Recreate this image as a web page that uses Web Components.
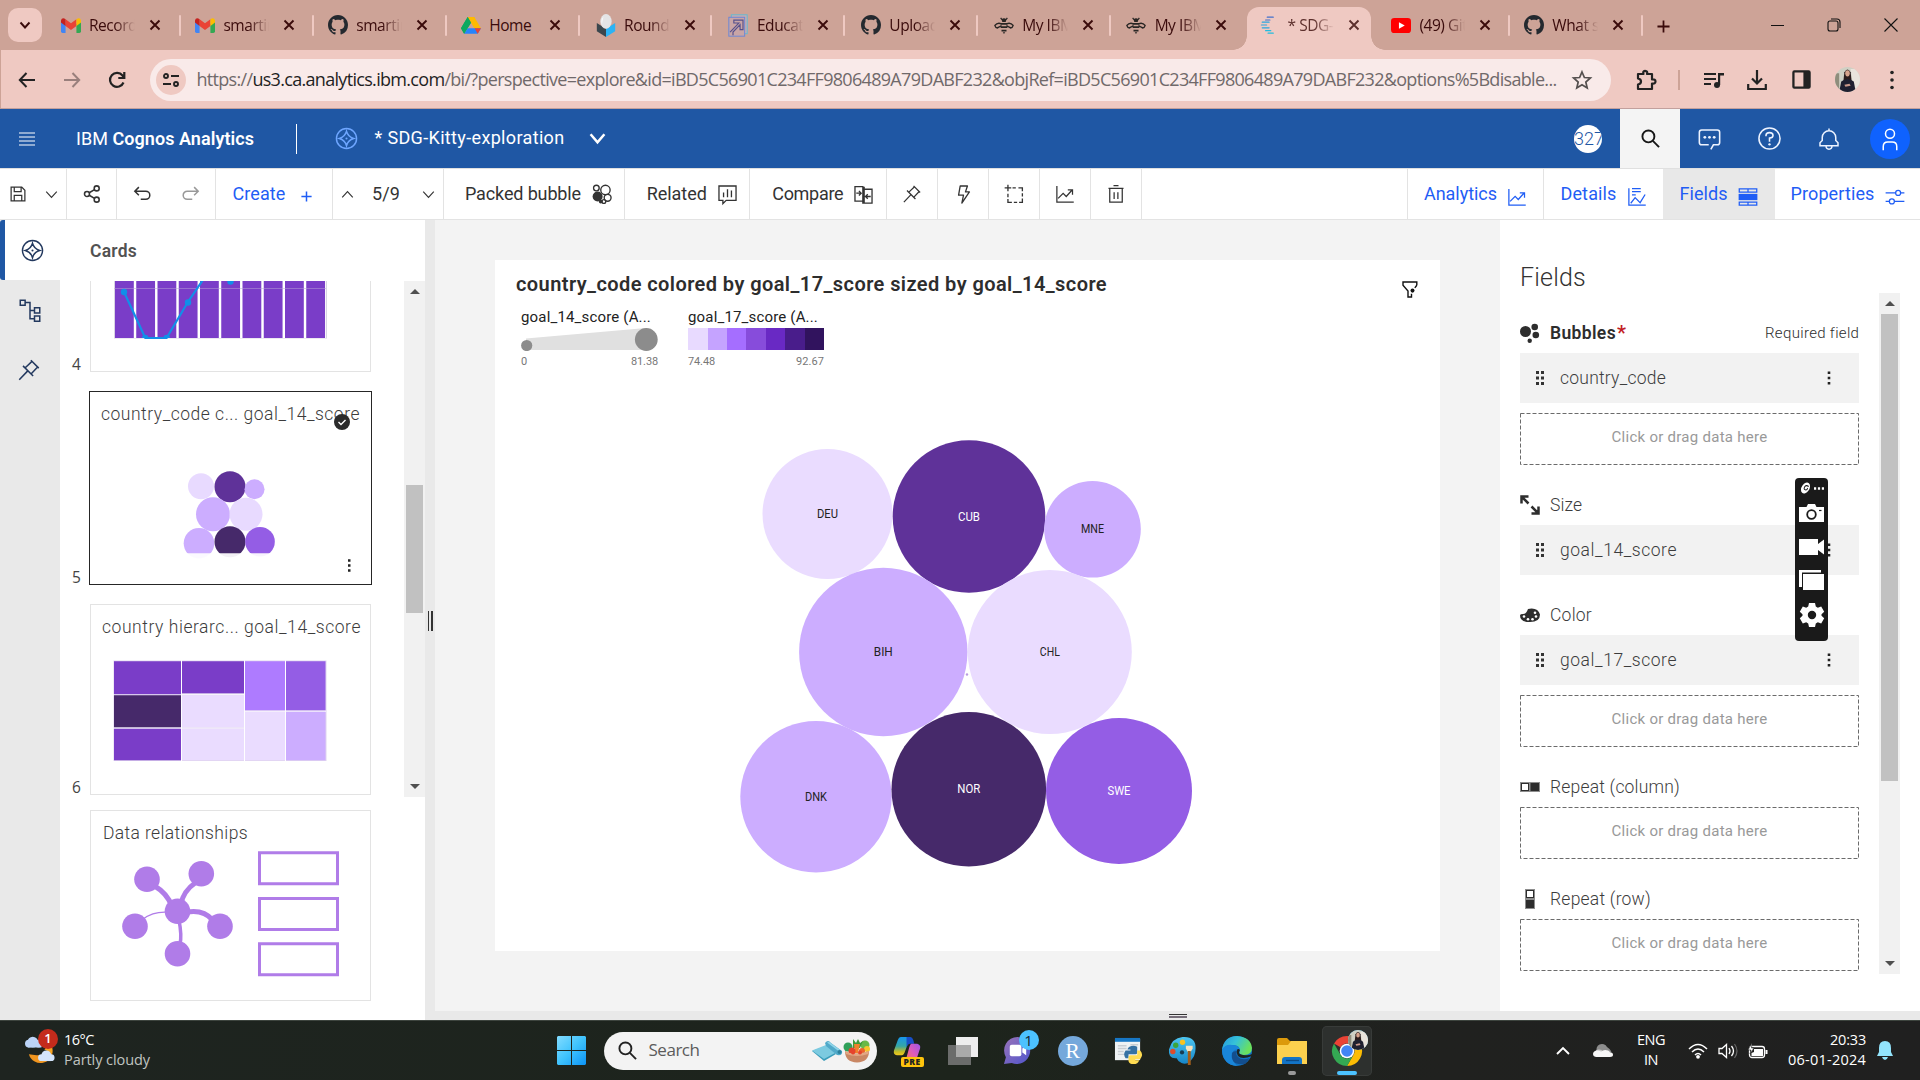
<!DOCTYPE html>
<html lang="en">
<head>
<meta charset="utf-8">
<title>SDG-Kitty-exploration</title>
<style>
html,body{margin:0;padding:0;width:1920px;height:1080px;overflow:hidden;background:#fff;font-family:Roboto,"Open Sans",sans-serif}
</style>
</head>
<body>
<analytics-desktop></analytics-desktop>
<script>
function define(name, css, html, setup) {
  customElements.define(name, class extends HTMLElement {
    constructor() {
      super();
      this.attachShadow({mode: 'open'});
    }
    connectedCallback() {
      if (this.ready) return;
      this.ready = true;
      const markup = typeof html === 'function' ? html(this) : html;
      const t = document.createElement('template');
      t.innerHTML = '<style>*{box-sizing:border-box}:host{display:block;box-sizing:border-box}' + css + '</style>' + markup;
      this.shadowRoot.appendChild(t.content.cloneNode(true));
      if (setup) setup(this);
    }
  });
}
const st = (d, w = 2, extra = '') => `<g fill="none" stroke="currentColor" stroke-width="${w}" ${extra}>${d}</g>`;
const p = d => `<path d="${d}"/>`;

const GITHUB = '<path d="M8 0C3.58 0 0 3.58 0 8c0 3.54 2.29 6.53 5.47 7.59.4.07.55-.17.55-.38 0-.19-.01-.82-.01-1.49-2.01.37-2.53-.49-2.69-.94-.09-.23-.48-.94-.82-1.13-.28-.15-.68-.52-.01-.53.63-.01 1.08.58 1.23.82.72 1.21 1.87.87 2.33.66.07-.52.28-.87.51-1.07-1.78-.2-3.64-.89-3.64-3.95 0-.87.31-1.59.82-2.15-.08-.2-.36-1.02.08-2.12 0 0 .67-.21 2.2.82.64-.18 1.32-.27 2-.27s1.36.09 2 .27c1.53-1.04 2.2-.82 2.2-.82.44 1.1.16 1.92.08 2.12.51.56.82 1.27.82 2.15 0 3.07-1.87 3.75-3.65 3.95.29.25.54.73.54 1.48 0 1.07-.01 1.93-.01 2.2 0 .21.15.46.55.38A8.01 8.01 0 0 0 16 8c0-4.42-3.58-8-8-8z" fill="#24292f"/>';
const compass = st('<circle cx="16" cy="16" r="14"/>' + p('M16 6c1.5 5.500 4.500 8.500 10 10c-5.500 1.500-8.500 4.500-10 10c-1.500-5.500-4.500-8.500-10-10c5.500-1.500 8.500-4.500 10-10z')) + '<circle cx="16" cy="16" r="1.500"/>';
const avatar = '<clipPath id="c"><circle cx="12" cy="12" r="12"/></clipPath><g clip-path="url(#c)"><path fill="#cfd0c4" d="M0 0h24v24H0z"/><path fill="#e9e4dc" d="M15 2h9v20h-6z"/><path fill="#8e8d7c" d="M0 6h4v18H0z"/><path fill="#2b1c1c" d="M9 5q3-5 6 0l1 9H8z"/><ellipse cx="12" cy="6" rx="2.200" ry="3" fill="#d6a38c"/><path fill="#1f2030" d="M4 24l2-10q6-5 12 0l2 10z"/><path fill="#c9988a" d="M9 17l5-1 1 2-5 1z"/></g>';

const ICONS = {
  gmail: ['0 0 24 18', '<path fill="#4285f4" d="M0 3v13q0 2 2 2h3.500V7.500z"/><path fill="#34a853" d="M24 3v13q0 2-2 2h-3.500V7.500z"/><path fill="#ea4335" d="M5.500 9.500V1.500L12 6.300l6.500-4.800v8L12 14.400z"/><path fill="#c5221f" d="M0 2.800v2.600l5.500 4.100V1.500L4 .5Q1-.8 0 2.800z"/><path fill="#fbbc04" d="M24 2.800v2.600l-5.500 4.100V1.500L20 .5q3-1.300 4 2.300z"/>'],
  github: ['0 0 16 16', GITHUB],
  drive: ['0 0 24 21', '<path fill="#0da960" d="M8 0h0L0 14l3.700 6.800L12 7z"/><path fill="#188038" d="M8 0h8l-4 7z"/><path fill="#ffba00" d="M8 0h8l8 14h-8z"/><path fill="#2684fc" d="M3.700 20.800L8 14h16l-4 6.800z"/><path fill="#ea4335" d="M16.300 14H24l-4 6.800z"/><path fill="#0da960" d="M8 0L0 14l3.700 6.800L12 7z"/>'],
  roundme: ['0 0 24 28', '<path fill="#3a464d" d="M1 11l11 7v10L1 21z"/><path fill="#2bb3f5" d="M23 11l-11 7v10l11-7z"/><ellipse cx="12" cy="9" rx="6.800" ry="9" fill="#e4e4e6"/><path fill="#fff" d="M9 3q-4 4-2 10" opacity=".7"/>'],
  educate: ['0 0 24 28', '<rect x="4" y="1" width="19" height="23" fill="#c9acb0" stroke="#63b9d3" stroke-width="1.200"/><rect x="1" y="4" width="19" height="23" fill="#c9a5a6" stroke="#6d86d6" stroke-width="1.200"/><path d="M2.500 22L13 11H7V7.500h11V19h-3.500v-6L6 22v4" fill="none" stroke="#55508c" stroke-width="1.400"/>'],
  bee: ['0 0 24 20', '<g fill="#292624"><path d="M9 3q3-3 6 0l-1 3h-4zM8 7h8v2H8zM8 11h8v2H8zM9 15h6v2H9zM10.500 18h3l-1.500 2z"/></g><g fill="none" stroke="#292624" stroke-width="1.500"><path d="M9 8Q4 6 1 10q1 3 3 3l5-3M3 13l6-2.500M15 8q5-2 8 2q-1 3-3 3l-5-3M21 13l-6-2.500M9.500 3L8 1M14.500 3L16 1"/></g>'],
  cognos: ['0 0 24 28', '<g stroke="#2aa6df" stroke-width="1.700" stroke-linecap="round"><path stroke="#4370cc" d="M10 3h7M8 7h5"/><path d="M4 10h8M3 14h6M4 18h8"/><path stroke="#22bddf" d="M8 22h6M11 25.500h6"/></g>'],
  youtube: ['0 0 24 18', '<rect width="24" height="18" rx="4" fill="#f00"/><path d="M9.500 5v8l7-4z" fill="#fff"/>'],
  x: ['0 0 12 12', st(p('M1.500 1.500l9 9M10.500 1.500l-9 9'), 1.9)],
  plusThin: ['0 0 14 14', st(p('M7 .5v13M.5 7h13'), 1.900)],
  down: ['0 0 14 14', st(p('M2.500 4.500L7 9.500l4.500-5'), 1.900)],
  chev: ['0 0 16 16', st(p('M1.500 4.500L8 11.500l6.500-7'), 1.400)],
  chevUp: ['0 0 16 16', st(p('M1.500 11.500L8 4.500l6.500 7'), 1.400)],
  chevBold: ['0 0 16 16', st(p('M1.500 4L8 11.500L14.500 4'), 2.400)],
  min: ['0 0 14 14', st(p('M0 7h14'), 1.100)],
  max: ['0 0 14 14', st('<rect x="1" y="3" width="10" height="10" rx="2"/>' + p('M4 1h6q3 0 3 3v6'), 1.100)],
  close: ['0 0 14 14', st(p('M.5.5l13 13M13.500.5l-13 13'), 1.100)],
  back: ['0 0 18 18', st(p('M17 9H2M8.500 2L1.800 9l6.700 7'), 2)],
  fwd: ['0 0 18 18', st(p('M1 9h15M9.500 2l6.700 7l-6.700 7'), 2)],
  reload: ['0 0 18 18', st(p('M15.500 11.500A7 7 0 1 1 14.500 4.500L16 6.500M16.300 1v6h-6'), 2.200)],
  tune: ['0 0 18 14', st('<circle cx="4" cy="3" r="2"/><circle cx="14" cy="11" r="2"/>' + p('M9 3h8M1 11h8'), 1.900)],
  star: ['0 0 20 20', st(p('M10 2l2.400 5.500l6 .5l-4.600 4l1.400 6L10 14.800L4.800 18l1.400-6l-4.600-4l6-.5z'), 1.700)],
  puzzle: ['0 0 22 22', st(p('M3 5h5.500q-1-3 1.500-3.200Q13 2 12 5h5v5.500q3.500-.5 3.500 2t-3.500 2V20H3v-4.500q3-.5 3-3T3 9.500z'), 2.200, 'stroke-linejoin="round"')],
  queue: ['0 0 20 18', st(p('M0 3h12M0 8h12M0 13h7'), 2) + '<circle cx="13" cy="14" r="3"/>' + p('M14 2h6v2.600h-3.800V14H14z')],
  download: ['0 0 20 20', st(p('M10 0v13M5 8.500l5 5l5-5M1.200 14v5h17.600v-5'), 2.200)],
  side: ['0 0 20 20', st('<rect x="1.500" y="1.500" width="17" height="17" rx="1"/>', 2.400) + p('M12 2h6v16h-6z')],
  vdots: ['0 0 4 20', '<circle cx="2" cy="2.500" r="1.800"/><circle cx="2" cy="10" r="1.800"/><circle cx="2" cy="17.500" r="1.800"/>'],
  vdotsS: ['0 0 4 16', p('M.7 1.500h2.600v2.600H.7zM.7 6.700h2.600v2.600H.7zM.7 11.900h2.600v2.600H.7z')],
  avatar: ['0 0 24 24', avatar],
  menu: ['0 0 16 14', st(p('M0 1h16M0 5h16M0 9h16M0 13h16'), 1.200)],
  compass: ['0 0 32 32', compass],
  search: ['0 0 20 20', st('<circle cx="7.800" cy="7.800" r="6.300"/>' + p('M12.500 12.500L19 19'), 2)],
  chat: ['0 0 32 32', st(p('M17.700 30L21 24h5a3 3 0 0 0 3-3V8a3 3 0 0 0-3-3H6a3 3 0 0 0-3 3v13a3 3 0 0 0 3 3h9')) + '<circle cx="10" cy="14.500" r="1.800"/><circle cx="16" cy="14.500" r="1.800"/><circle cx="22" cy="14.500" r="1.800"/>'],
  help: ['0 0 32 32', st('<circle cx="16" cy="16" r="13.500"/>' + p('M11.500 13v-1q0-3.500 4.500-3.500t4.500 3.500q0 3-4.500 3.500V20')) + '<circle cx="16" cy="23.500" r="1.500"/>'],
  bell: ['0 0 32 32', st(p('M16 2v3M4 25v-4l3-3v-4a9 9 0 0 1 18 0v4l3 3v4zM12 25q0 4.500 4 4.500t4-4.500'))],
  user: ['0 0 32 32', st('<circle cx="16" cy="9" r="6"/>' + p('M7 31v-5q0-6 6-6h6q6 0 6 6v5'), 2)],
  save: ['0 0 32 32', st(p('M5 5h17l5 5v17H5zM10 5v7h11V5M10 27v-9h12v9'), 2)],
  share: ['0 0 32 32', st('<circle cx="23.500" cy="7" r="4"/><circle cx="8" cy="16" r="4"/><circle cx="23.500" cy="25" r="4"/>' + p('M11.500 14l8.500-5M11.500 18l8.500 5'), 2.500)],
  undo: ['0 0 32 32', st(p('M11 5l-6.500 6.500L11 18M5 11.500h17a6.500 6.500 0 0 1 0 13h-8'), 2.400)],
  redo: ['0 0 32 32', st(p('M21 5l6.500 6.500L21 18M27 11.500H10a6.500 6.500 0 0 0 0 13h8'), 2.400)],
  packed: ['0 0 32 32', '<circle cx="9" cy="20" r="8"/><circle cx="14" cy="28" r="3"/>' + st('<circle cx="21.500" cy="9.500" r="7.500"/><circle cx="7" cy="6.500" r="4.500"/><circle cx="25" cy="22" r="5.500"/><circle cx="19" cy="28" r="3"/>', 2.200)],
  related: ['0 0 32 32', st(p('M3 3h26v22H14l-5 5v-5H3zM10 20v-7M16 20V8M22 20v-10'), 2)],
  compare: ['0 0 32 32', st(p('M3 4h12v22H3zM17 8h12v21H17zM17 8V4M5 14h7M9 10.500l3.500 3.500L9 17.500M27 19h-8M22.500 15.500L19 19l3.500 3.500M15 4v25h2'), 2)],
  pin: ['0 0 32 32', st(p('M18.500 3L29 13.500M20 4.500l-9 8.500M27.500 12l-8.500 9M8 10.500l13.500 13.500M14 17.500L3 29M11 13l-2-1'), 2)],
  bolt: ['0 0 32 32', st(p('M11 3h11l-3 9h6L13.500 29l2.500-12H8.500z'), 2, 'stroke-linejoin="round"')],
  marquee: ['0 0 32 32', st(p('M6 1v10M1 6h10M13 6h5M22 6h6v5M28 14v5M28 22v6h-5M20 28h-5M12 28H6v-5M6 20v-5'), 2)],
  line: ['0 0 32 32', st(p('M3 3v26h27M5 23l8-8l5 5l9-10M20.500 9.500H28V17'), 2)],
  trash: ['0 0 32 32', st(p('M4 7h24M12 2.500h8M6 7v22h20V7M13 13v11M19 13v11'), 2)],
  details: ['0 0 32 32', st(p('M3 2v27h27M8 2.500h14M8 7.500h14M8 12.500h6M6 26l7-9l8 8l8-13'), 2)],
  fields: ['0 0 32 32', p('M1 11h30v10H1z') + st(p('M2 3h28v5H2zM2 24h28v5H2zM16 3v5M16 24v5'), 2)],
  sliders: ['0 0 32 32', st('<circle cx="21" cy="9.500" r="4"/><circle cx="11" cy="23" r="4"/>' + p('M1 9.500h16M25 9.500h6M1 23h6M15 23h16'), 2)],
  tree: ['0 0 32 32', st(p('M3 3h6.500v6.500H3zM22 13h7v7h-7zM22 24h7v7h-7zM10 6h6v21.500h6M16 16.500h6'), 2)],
  filter: ['0 0 16 16', st(p('M14.800 4V1H1v3l5 5.500V15h3.500v-3M14.800 4l-2 2.500'), 1.400) + '<circle cx="10.500" cy="9" r="2"/>'],
  bubbles: ['0 0 20 20', '<circle cx="5.500" cy="8.500" r="5.500"/><circle cx="14.700" cy="4" r="3.300"/><circle cx="15.800" cy="12" r="3.300"/><circle cx="9.700" cy="17.700" r="2.200"/>'],
  size: ['0 0 20 20', st(p('M1.500 8.500v-7h7M1.500 1.500l7 7M18.500 11.500v7h-7M18.500 18.500l-7-7'), 2.500)],
  palette: ['0 0 20 16', '<path d="M8 1q10-2 12 6q0 8-10 8Q0 15 0 8q0-1.500 3-1.500t5-5.500z"/><g fill="#fff"><circle cx="4" cy="9" r="1.300"/><circle cx="8" cy="12" r="1.300"/><circle cx="12.500" cy="12" r="1.300"/><circle cx="16" cy="9" r="1.300"/><circle cx="15" cy="5" r="1.300"/></g>'],
  repcol: ['0 0 20 10', '<path fill="#8d8d8d" d="M0 0h20v10H0z"/><path fill="#fff" d="M2 2h6v6H2z"/><path d="M10.500 1H19v8h-8.500z"/>' + st('<rect x="1.500" y="1.500" width="7" height="7"/>', 1)],
  reprow: ['0 0 20 20', '<path fill="#8d8d8d" d="M5 0h10v20H5z"/><path fill="#fff" d="M7 2h6v6H7z"/><path d="M6 11h8v8H6z"/>' + st('<rect x="6.500" y="1.500" width="7" height="7"/>', 1)],
  grip: ['0 0 8 14', p('M0 0h3v3H0zM5 0h3v3H5zM0 5.500h3v3H0zM5 5.500h3v3H5zM0 11h3v3H0zM5 11h3v3H5z')],
  camera: ['0 0 25 18', p('M0 3h7.500l1.500-3h7l1.500 3H25v15H0z') + '<g fill="none" stroke="#1a1a1a" stroke-width="1.800"><circle cx="12.500" cy="10.500" r="4.300"/><path d="M20 6.500h2.500" stroke-width="1.200"/></g>'],
  video: ['0 0 25 16', p('M0 0h19v5l6-4.500v15L19 11v5H0z')],
  stack: ['0 0 25 20', '<path d="M0 0h22v2.500H3V17H0z"/><path d="M4 4h21v16H4z"/>'],
  gear: ['0 0 24 24', '<path fill-rule="evenodd" d="M9 0h6l.8 3.600l2 1.200l3.400-1.200l3 5.200l-2.700 2.400v1.600l2.700 2.400l-3 5.200l-3.400-1.200l-2 1.200L15 24H9l-.8-3.600l-2-1.200l-3.400 1.200l-3-5.200l2.700-2.400v-1.600L-.2 8.800l3-5.200l3.400 1.200l2-1.200zM12 7.800a4.200 4.200 0 1 0 0 8.400a4.200 4.200 0 1 0 0-8.400z"/>'],
  swirl: ['0 0 12 12', '<ellipse cx="6" cy="6" rx="4.200" ry="6" transform="rotate(38 6 6)"/><path d="M9.500 4.500q-3-2-4.500.5t1.500 3q2-.5 1.500-2" fill="none" stroke="#1a1a1a" stroke-width="1.100"/>'],
  dots3: ['0 0 11 3', p('M0 .3h2.400v2.400H0zM4.300.3h2.400v2.400H4.300zM8.600.3H11v2.400H8.600z')],
  weather: ['0 0 32 34', '<path d="M4 25a12 12 0 0 0 24-7q-8 9-16 8z" fill="#f0951f"/><path d="M20 20l8-8v12z" fill="#f5a623"/><g fill="#bcd4f7"><circle cx="8" cy="12.500" r="5.500"/><circle cx="4" cy="14" r="4"/><path d="M3 13h14v5H3z"/><circle cx="14" cy="14" r="4"/></g><g fill="#d4e5fd"><circle cx="22" cy="26" r="5"/><circle cx="17" cy="28.500" r="3.500"/><circle cx="27" cy="28.500" r="3.500"/><path d="M17 27h10v5H17z"/></g>'],
  windows: ['0 0 29 29', '<linearGradient id="w" x1="0" y1="0" x2="1" y2="1"><stop offset="0" stop-color="#83dcff"/><stop offset=".5" stop-color="#3fc3fd"/><stop offset="1" stop-color="#0c93f5"/></linearGradient><path fill="url(#w)" d="M1 0h13v14H0V1zM15 0h13l1 1v13H15zM0 15h14v14H1l-1-1zM15 15h14v13l-1 1H15z"/>'],
  mat: ['0 0 30 20', '<path fill="#3a9cba" d="M0 10L14 5l10 8l-12 7z"/><path fill="#7ccae0" d="M0 9.500L14 4l9 8l-11 6z"/><path fill="#4fa9c9" d="M13 2q3-4 6 0l11 8q1 5-5 4L14 5z"/><path fill="#8fd4e8" d="M15 1.500q2-1.500 4 .8l9.500 7q-1 1-3 0z"/><circle cx="27.500" cy="11" r="2" fill="#2b7f9b"/>'],
  salad: ['0 0 26 24', '<circle cx="4" cy="8" r="4.500" fill="#2fa05a"/><circle cx="21" cy="6" r="4.500" fill="#68b947"/><path fill="#3f9b3a" d="M9 0l3 4l2-4l2 4l3-2l-3 7H9z"/><path fill="#f2812c" d="M10 5h6l-2 9h-3z"/><circle cx="23" cy="10" r="3" fill="#f5c62b"/><circle cx="8" cy="12" r="3.500" fill="#e5442d"/><circle cx="18" cy="12" r="3" fill="#ec642c"/><path fill="#c98764" d="M1 12q5 3 12 2.500T25 12q0 11-12 11.500Q1 23 1 12z"/><path fill="#e2a784" d="M1 12q5 3 12 2.500T25 12l-1 3q-11 4-22 0z"/><circle cx="9" cy="13.500" r="2" fill="#e5442d"/><circle cx="16" cy="13.500" r="2" fill="#e5442d"/>'],
  copilot: ['0 0 30 28', '<linearGradient id="a" x1="0" y1="0" x2="0" y2="1"><stop offset="0" stop-color="#1797ee"/><stop offset=".5" stop-color="#35a6a5"/><stop offset=".8" stop-color="#c3bc27"/><stop offset="1" stop-color="#f2c91c"/></linearGradient><linearGradient id="b" x1="1" y1="0" x2="0" y2="1"><stop offset="0" stop-color="#9d55e8"/><stop offset=".5" stop-color="#df5abb"/><stop offset="1" stop-color="#fb7e4f"/></linearGradient><path fill="url(#a)" d="M8 0h10l-6 16q-1 3-4 3H4q-4-1-3-5L5 3q1-3 3-3z"/><path fill="#184ec8" d="M14 0h4q2 0 3 3l1 4h-4q-3 0-4 4z"/><path fill="url(#b)" d="M19 7h6q4 1 3 5l-3 9q-1 4-5 4h-7l4-15q1-3 2-3z"/>'],
  taskview: ['0 0 30 28', '<path fill="#6b6c6b" d="M0 8h23v20H0z"/><path fill="#eee" d="M8 0h22v20H8z"/><path fill="#aaa" d="M8 8h15v12H8z"/>'],
  teams: ['0 0 30 30', '<linearGradient id="t" x1="0" y1="0" x2="1" y2="1"><stop offset="0" stop-color="#9a73b8"/><stop offset="1" stop-color="#5055cd"/></linearGradient><path fill="url(#t)" d="M15 1a14 14 0 1 1-6 27L1 29l2-7A14 14 0 0 1 15 1z"/><rect x="7" y="9" width="12" height="12" rx="2" fill="#fff"/><path fill="#fff" d="M20 13l4-3v10l-4-3z"/>'],
  python: ['0 0 30 30', '<path fill="#eef2f4" d="M1 3h26v22H1z"/><path fill="#1777c5" d="M1 2h26v4H1z"/><path stroke="#c9ced3" stroke-width="1.500" d="M4 10h9M4 13h9M4 16h6M4 19h8M17 9h8"/><path fill="#3571a3" d="M16 11q4-2 8 0v6q0 2-2 2h-7v4h-3q-3-4 0-8h5v-1h-3q0-2 2-3z"/><path fill="#ffdc52" d="M20 29q-4 0-5-3v-4q0-2 2-2h7v-5h3q4 4 0 9h-5v1h4q-1 4-6 4z"/>'],
  paint: ['0 0 30 30', '<linearGradient id="p" x1="0" y1="0" x2="0" y2="1"><stop offset="0" stop-color="#4cc5f1"/><stop offset="1" stop-color="#1787c9"/></linearGradient><path fill="url(#p)" d="M15 1q14-1 13.500 12q0 8-5.500 13q-4 4-9 2q-4-2-5-5Q0 24 1 14Q4 2 15 1z"/><circle cx="15" cy="6.500" r="2.800" fill="#f8c321"/><circle cx="8" cy="9.500" r="2.800" fill="#3ba53c"/><circle cx="5" cy="16" r="2.800" fill="#de4b2a"/><circle cx="14.500" cy="17" r="2.200" fill="#173d54"/><path fill="#f6e3bf" d="M18.500 10h7v3l-2 3.500h-3l-2-3.500z"/><path fill="#a35d19" d="M20.500 15.500h3V30h-3z"/>'],
  edge: ['0 0 30 30', '<linearGradient id="e" x1="0" y1="0" x2="1" y2=".4"><stop offset="0" stop-color="#2496dd"/><stop offset=".5" stop-color="#36c2d8"/><stop offset="1" stop-color="#6ae15d"/></linearGradient><circle cx="15" cy="15" r="15" fill="#1173c5"/><path fill="url(#e)" d="M0 14Q2 0 15 0q14 1 15 12q0 7-8 7q-6 0-4-4q0-6-7-6Q3 9 0 14z"/><path fill="#1a86da" d="M0 14q3-6 10-5q7 0 8 5q-7-2-8 5q0 6 5 11Q1 29 0 14z"/><path fill="#134e8e" d="M10 17q-2 13 13 11l5-6q-8 3-12-1q-3-3-1-6q-4 0-5 2z"/><path fill="#1e2420" d="M15 14q-1 3 1 6q4 4 14 0v-2q-3 2-9 1q-4-1-4-2q0-2 1-3q-2-2-3 0z"/>'],
  folder: ['0 0 30 26', '<path fill="#dc9a0b" d="M0 2q0-2 2-2h8l3 3h15v6H0z"/><path fill="#fcd04e" d="M0 7h11l3-4h16v23H0z"/><path fill="#1374c6" d="M5 26v-4q0-3 3-3h14q3 0 3 3v4z"/><path stroke="#0c4a86" stroke-width="1.300" d="M9 22.500h13"/>'],
  chrome: ['0 0 30 30', '<path fill="#ea4335" d="M15 0a15 15 0 0 1 13 7.500H15a7.500 7.500 0 0 0-6.500 3.700L2 7.500A15 15 0 0 1 15 0z"/><path fill="#fbbc04" d="M28 7.500A15 15 0 0 1 15 30l6.500-11.200A7.500 7.500 0 0 0 15 7.500z"/><path fill="#34a853" d="M2 7.500A15 15 0 0 0 15 30l6.500-11.200a7.500 7.500 0 0 1-13 0z"/><circle cx="15" cy="15" r="7.300" fill="#fff"/><circle cx="15" cy="15" r="5.800" fill="#4285f4"/>'],
  trayUp: ['0 0 14 8', st(p('M1 7l6-6l6 6'), 1.900)],
  cloud: ['0 0 20 14', '<path fill="#8d8d8d" d="M4 8a5.500 5.500 0 0 1 10-5q6 4 4 8H2z"/><path fill="#c9c9c9" d="M1 9q2-5 8-3l-2 7H3z"/><path fill="#f7f7f7" d="M4 13q-4 0-4-3t4-3.500q2 0 4 1Q11 5 15 6.500q2 1 2 2q3 0 3 2.200T17 13z"/>'],
  wifi: ['0 0 20 16', st(p('M1 6q9-9 18 0M4 9q6-6 12 0M7 12q3-3 6 0'), 1.500) + '<circle cx="10" cy="13.800" r="1.900"/>'],
  sound: ['0 0 20 16', st(p('M1 5.500h3L8.500 1.500v13L4 10.500H1zM11 5q2 3 0 6M13.500 3q4 5 0 10'), 1.300) + '<path d="M16.500 1q5 7 0 14" fill="none" stroke="#666" stroke-width="1.200"/>'],
  battery: ['0 0 20 16', st('<rect x="1.500" y="3.500" width="15" height="11" rx="2.500"/>', 1.300) + p('M6 6h9v7H3.500v-3L6 9zM17.500 7h2v4h-2z') + '<path d="M4 0L0 7h3l-1 4l4-6H3.500z" stroke="#202221" stroke-width=".6"/>'],
  bellFill: ['0 0 16 19', p('M8 0q6 0 6 7v4l2 4H0l2-4V7q0-7 6-7zM5 16h6q-1 3-3 3t-3-3z')]
};
const ic = (name, w, h = w, style = '') => `<ui-icon name="${name}" w="${w}" h="${h}" style="${style}"></ui-icon>`;
const lb = (text, w, size, style = '') => `<ui-label w="${w}" style="font-size:${size}px;${style}">${text}</ui-label>`;

/* ---------- browser chrome ---------- */
define('browser-tab', `
:host{width:132.900px;height:50px;flex:none}
.tab{display:flex;align-items:center;height:50px;padding-left:var(--pad,15px);position:relative;color:#3a0b0b}
:host([active]) .tab{color:#5c2f2c}
.bg{display:none;position:absolute;left:4px;right:5px;top:7px;bottom:0;background:#efc9c2;border-radius:12px 12px 0 0}
:host([active]) .bg{display:block}
.bg::before,.bg::after{content:"";position:absolute;bottom:0;width:14px;height:14px;background:radial-gradient(circle at 0 0,transparent 13.500px,#efc9c2 14px)}
.bg::before{left:-14px}.bg::after{right:-14px;background:radial-gradient(circle at 100% 0,transparent 13.500px,#efc9c2 14px)}
.fav{width:20px;display:flex;justify-content:center;position:relative}
.title{position:relative;width:47px;margin-left:8.500px;overflow:hidden;white-space:nowrap;font:15.500px "Open Sans",sans-serif;letter-spacing:-.45px;-webkit-mask-image:linear-gradient(90deg,#000 55%,transparent 98%);padding-bottom:1px}
:host([full]) .title{-webkit-mask-image:none}
.x{margin-left:13px;position:relative}
.sep{position:absolute;right:-1px;top:15px;width:2px;height:21px;background:#efc9c2;border-radius:1px}
:host([nosep]) .sep{display:none}`,
el => `<div class="tab"><div class="bg"></div><div class="fav">${ic(el.getAttribute('icon'), el.getAttribute('iw') || 20, el.getAttribute('ih') || 20)}</div><div class="title"><slot></slot></div><div class="x">${ic('x', 12)}</div><div class="sep"></div></div>`);

define('browser-tabs', `
:host{height:50px;background:#cda397;display:flex}
.drop{width:34px;height:34px;margin:8px 5px 0 8px;border-radius:10px;background:#efc9c2;display:flex;align-items:center;justify-content:center;color:#3a0b0b}
.plus{margin:18px 0 0 15px;color:#3a0b0b}
.win{margin-left:auto;display:flex;align-items:center;gap:43px;padding-right:22px;color:#111}`,
`<div class="drop">${ic('down', 14)}</div>
<browser-tab icon="gmail" ih="15" style="--pad:13.500px">Record</browser-tab><browser-tab icon="gmail" ih="15">smartin</browser-tab><browser-tab icon="github">smartin</browser-tab><browser-tab icon="drive" ih="17" full>Home</browser-tab><browser-tab icon="roundme" ih="23" style="--pad:17px">Rounde</browser-tab><browser-tab icon="educate" ih="23" style="--pad:17px">Educat</browser-tab><browser-tab icon="github" style="--pad:16.500px">Upload</browser-tab><browser-tab icon="bee" ih="17" style="--pad:16.500px">My IBM</browser-tab><browser-tab icon="bee" ih="17" nosep style="--pad:16px">My IBM</browser-tab><browser-tab icon="cognos" ih="20" active nosep style="--pad:16px">* SDG-K</browser-tab><browser-tab icon="youtube" ih="15">(49) Git</browser-tab><browser-tab icon="github">What s</browser-tab>
<div class="plus">${ic('plusThin', 13)}</div>
<div class="win">${ic('min', 13)}${ic('max', 14)}${ic('close', 14)}</div>`);

define('browser-toolbar', `
:host{height:59px;background:#efc9c2;border-bottom:1px solid #c2a09d;display:flex;align-items:center;padding:1px 0 0 18px;color:#222;box-shadow:inset 1px 0 #cda397}
.box{width:1461px;height:42px;border-radius:21px;background:#f9eae9;margin-left:23.500px;display:flex;align-items:center;padding-left:6px}
.chip{width:30px;height:30px;border-radius:50%;background:#efc9c2;display:flex;align-items:center;justify-content:center}
.url{font-family:"Open Sans",sans-serif;color:#70696a;margin-left:11px;width:1375px}
.url b{font-weight:400;color:#1f1f1f}
.sep{width:2px;height:20px;background:#cda397;margin:0 24px 0 21px}`,
`${ic('back', 18)}${ic('fwd', 18, 18, 'margin-left:27px;color:#997f7c')}${ic('reload', 18, 18, 'margin-left:27px')}
<div class="box"><div class="chip">${ic('tune', 18, 14)}</div><div class="url">${lb('https://<b>us3.ca.analytics.ibm.com</b>/bi/?perspective=explore&amp;id=iBD5C56901C234FF9806489A79DABF232&amp;objRef=iBD5C56901C234FF9806489A79DABF232&amp;options%5Bdisable...', 1360, 18)}</div>${ic('star', 20, 20, 'color:#55504f;margin-left:0px')}</div>
${ic('puzzle', 22, 22, 'margin-left:24px')}<div class="sep"></div>${ic('queue', 20, 18)}${ic('download', 20, 20, 'margin-left:23.5px')}${ic('side', 19, 19, 'margin-left:25px')}${ic('avatar', 25, 25, 'margin-left:24px')}${ic('vdots', 4, 20, 'margin-left:29.5px')}`);

/* ---------- product header ---------- */
define('product-header', `
:host{height:59px;background:#1f57a4;display:flex;align-items:center;color:#fff}
.sep{width:1px;height:30px;background:#fff;margin-left:42px}
.count{width:28px;height:28px;border-radius:50%;background:#fff;color:#1f57a4;overflow:hidden;display:flex;align-items:center;justify-content:flex-start;margin-left:auto;margin-right:18px}
.srch{width:60px;height:59px;background:#f4f4f4;color:#161616;display:flex;align-items:center;justify-content:center}
.btn{width:60px;display:flex;justify-content:center;color:#edf3ff;padding-right:2px}
.user{width:40px;height:40px;border-radius:50%;background:#0f62fe;display:flex;align-items:center;justify-content:center;margin:0 10px}`,
`${ic('menu', 16, 14, 'margin-left:19px')}${lb('IBM <b style="font-weight:600">Cognos Analytics</b>', 178, 18, 'margin-left:41px')}<div class="sep"></div>
${ic('compass', 23, 23, 'margin-left:38px;color:#6ea6ff')}${lb('* SDG-Kitty-exploration', 190, 18, 'margin:-2px 0 0 16.5px')}${ic('chevBold', 17, 17, 'margin-left:24px')}
<div class="count">${lb('327', 30, 18, 'font-weight:300')}</div><div class="srch">${ic('search', 19)}</div><div class="btn">${ic('chat', 25)}</div><div class="btn">${ic('help', 25)}</div><div class="btn">${ic('bell', 24)}</div><div class="user">${ic('user', 24)}</div>`);

/* ---------- tool bar ---------- */
define('tool-cell', `
:host{height:50px;flex:none;display:flex;align-items:center;justify-content:center;border-right:1px solid #e3e3e3}
:host([last]){border-right:0}:host([on]){background:#e8e8e8}`, '<slot></slot>', el => { el.style.width = el.getAttribute('w') + 'px'; });
const cell = (w, html, attr = '') => `<tool-cell w="${w}" ${attr}>${html}</tool-cell>`;
const act = (w, pad, t, tw, name, gap, attr = '') => cell(w, lb(t, tw, 18, `margin-left:${pad}px`) + ic(name, 20, 20, `margin:5px auto 0 ${gap}px`), attr);
define('tool-bar', `
:host{height:52px;border-top:1px solid #e0e0e0;border-bottom:1px solid #e3e3e3;background:#fff;display:flex;color:#333;padding-top:0}
.gap{flex:1;border-right:1px solid #e3e3e3}.blue{color:#1f5df5;display:flex}`,
cell(67, ic('save', 20, 20) + ic('chev', 13, 13, 'margin-left:17px')) + cell(50, ic('share', 20)) +
cell(99, ic('undo', 20) + ic('redo', 20, 20, 'margin-left:29px;color:#999')) +
cell(117, `<span style="color:#1f5df5;display:flex;align-items:center">${lb('Create', 53, 18)}${ic('plusThin', 11, 11, 'margin:6px 4px 0 15px')}</span>`) +
cell(111, ic('chevUp', 13) + lb('5/9', 28, 18, 'margin:0 22px 0 18px') + ic('chev', 13)) +
cell(181, lb('Packed bubble', 116, 18) + ic('packed', 20, 20, 'margin-left:11px;margin-right:-9px')) +
cell(124.500, lb('Related', 60, 18, 'margin-left:11px') + ic('related', 21, 21, 'margin-left:10px')) +
cell(137.500, lb('Compare', 71, 18, 'margin-left:11px') + ic('compare', 21, 21, 'margin-left:10px')) +
cell(51, ic('pin', 20)) + cell(51, ic('bolt', 21)) + cell(51, ic('marquee', 21)) + cell(51, ic('line', 20)) + cell(51, ic('trash', 20)) +
`<div class="gap"></div><div class="blue">` +
act(136, 16.5, 'Analytics', 73, 'line', 10) + act(119, 17, 'Details', 56, 'details', 10, 'last') +
act(112.500, 17, 'Fields', 48, 'fields', 10, 'last on') + act(145, 15.5, 'Properties', 84, 'sliders', 10, 'last') + '</div>');

/* ---------- left rail and cards ---------- */
define('side-rail', `
:host{width:60px;background:#e9e9e9;color:#23395f}
div{height:60px;display:flex;align-items:center;justify-content:center}
.on{background:#fff;border-left:5px solid #1f57a4;border-radius:3px 0 0 3px}`,
`<div class="on">${ic('compass', 23)}</div><div>${ic('tree', 24, 24)}</div><div>${ic('pin', 24, 24, 'margin-right:2px')}</div>`);

define('scroll-bar', `
:host{display:flex;flex-direction:column;width:21px;background:#f1f1f1;align-items:center}
.a{height:21px;display:flex;align-items:center;flex:none}.a i{width:0;height:0;border:5px solid transparent;border-width:0 5px 5px;border-bottom-color:#505050}
.a.d i{border-width:5px 5px 0;border-top-color:#505050}:host([dim]) .a:first-child i{border-bottom-color:#a3a3a3}
.t{width:17px;background:#c1c1c1;flex:none}.f{flex:1}`,
el => `<div class="a"><i></i></div><div class="t" style="margin-top:${el.getAttribute('top')}px;height:${el.getAttribute('size')}px"></div><div class="f"></div><div class="a d"><i></i></div>`);

define('viz-card', `
:host{display:flex;align-items:flex-end;flex:none}
.n{width:30px;padding-left:12px;font:15.500px "Open Sans",sans-serif;line-height:16px;color:#444;flex:none}
.c{width:281px;height:191px;border:1px solid #e3e3e3;background:#fff;padding:11px 0 0 11px;position:relative;color:#3c3c3c;font-weight:300}
:host([sel]) .n{width:29px}:host([sel]) .c{width:283px;height:194px;border-color:#262626}
.badge{display:none;position:absolute;left:244px;top:22px;width:16px;height:16px}
:host([sel]) .badge{display:block}
::slotted(svg){display:block}`,
el => `<div class="n">${el.getAttribute('n') || ''}</div><div class="c"><slot></slot><svg class="badge" viewBox="0 0 16 16"><circle cx="8" cy="8" r="8" fill="#2b2b2b"/><path d="M4.500 8l2.500 2.500l4.500-4.500" fill="none" stroke="#fff" stroke-width="1.400"/></svg></div>`);

let bars = '';
for (let i = 0; i < 10; i++) bars += `<rect x="${(115 + i * 21.25).toFixed(2)}" y="270" width="18.800" height="68" fill="#7a3dc8"/>`;
const miniBubbles = [[201, 486, 13, '#e8daff'], [230, 486.5, 15.5, '#5f3299'], [254.500, 489, 10, '#ccadff'], [213, 514, 17, '#ccadff'], [246, 514, 16.5, '#e8daff'], [199, 543, 15.3, '#ccadff'], [230, 541.5, 15.5, '#46296a'], [260, 541.5, 14.8, '#945de5']]
  .map(b => `<circle cx="${b[0]}" cy="${b[1]}" r="${b[2]}" fill="${b[3]}"/>`).join('');
const tree = [[114, 661, 67, 33, '#7a3dc8'], [114, 695, 67, 32, '#46296a'], [114, 728.5, 67, 31.5, '#7a3dc8'], [182, 661, 62, 32, '#7a3dc8'], [182, 695, 62, 32, '#eadcff'], [182, 728.5, 62, 31.500, '#eadcff'], [245, 661, 40, 49, '#ae7bff'], [245, 711.5, 40, 48.5, '#eadcff'], [286, 661, 39.5, 49, '#945de5'], [286, 711.5, 39.5, 48.5, '#ccadff']]
  .map(r => `<rect x="${r[0]}" y="${r[1]}" width="${r[2]}" height="${r[3]}" fill="${r[4]}"/>`).join('');

define('cards-panel', `
:host{width:365px;background:#fff}
h2{margin:0;font-size:0;height:61px;padding:20px 0 0 30px;color:#525252}
.list{display:flex;height:516px}
.cards{width:344px;overflow:hidden;display:flex;flex-direction:column;justify-content:flex-end;gap:19px;padding-bottom:2px}
.rel{margin-top:13px}`,
`<h2>${lb('Cards', 47, 17.5, 'font-weight:600')}</h2>
<div class="list"><div class="cards">
<viz-card n="4"><svg width="260" height="150" viewBox="102 193 260 150"><path d="M114 270h213v68.500H114z" fill="#d9d3e4"/><path d="M115 270h211v68H115z" fill="#fff"/>${bars}<path d="M114 288.500h212" stroke="#b9a5d6" stroke-width=".5"/><path d="M124 292l21.300 46h21.300l21.300-36L209 271" fill="none" stroke="#128fe8" stroke-width="2.200"/><g fill="#128fe8"><circle cx="124" cy="292" r="3.200"/><path d="M142 338a3.200 3.200 0 0 1 6.400 0zM163.500 338a3.200 3.200 0 0 1 6.400 0z"/><circle cx="188" cy="302.500" r="3.200"/><circle cx="230.500" cy="281.500" r="3.200"/></g></svg></viz-card>
<viz-card n="5" sel>${lb('country_code c... goal_14_score', 259, 17.5)}<svg width="260" height="152" viewBox="101 425.750 260 152"><g opacity=".06">${miniBubbles}</g><svg x="101" y="427" width="260" height="126" viewBox="101 427 260 126">${miniBubbles}</svg><g fill="#222"><path d="M348 559h2.500v2.500H348zM348 564h2.500v2.500H348zM348 569h2.500v2.500H348z"/></g></svg></viz-card>
<viz-card n="6">${lb('country hierarc... goal_14_score', 259, 17.5)}<svg width="260" height="140" viewBox="102 638.750 260 140"><path fill="#dfd3ef" d="M113.500 660.300h213v100.500h-213z"/><path stroke="#fff" d="M113 694.500h131M113 727.800h131M181.500 660v101M244.500 660v101M285.500 660v101M245 711h81"/>${tree}</svg></viz-card>
</div><scroll-bar top="183" size="128"></scroll-bar></div>
<viz-card class="rel">${lb('Data relationships', 145, 17.5, 'margin-left:1px')}<svg width="260" height="145" viewBox="102 844.750 260 145"><g fill="none" stroke="#b07ce8"><path stroke-width="5" d="M155 886q12 7 17 20M196 882q-13 9-15 22M187 912q16-3 26 8"/><path stroke-width="3.500" d="M179 920q3 15 1 24"/><path stroke-width="1.300" d="M143 919q10-8 25-7"/><path stroke-width="3" d="M259.500 852.500h78v31h-78zM259.500 898.300h78v31h-78zM259.500 943.500h78v31h-78z"/></g><g fill="#b07ce8"><circle cx="147" cy="879" r="12.800"/><circle cx="201.300" cy="873.500" r="12.800"/><circle cx="177.500" cy="911" r="12.800"/><circle cx="135" cy="926" r="12.800"/><circle cx="220" cy="926" r="12.800"/><circle cx="177.500" cy="953.500" r="12.800"/></g></svg></viz-card>`);

/* ---------- packed bubble canvas ---------- */
const BUB = [['DEU', 827.5, 514, 65, '#eadcff', '#222', 21], ['CUB', 969, 516.5, 76.3, '#5f3299', '#fff', 22], ['MNE', 1092.5, 529.3, 48.3, '#ccadff', '#222', 23], ['BIH', 883.3, 652, 84.2, '#ccadff', '#222', 19], ['CHL', 1049.8, 652, 82, '#eadcff', '#222', 20], ['DNK', 816, 796.7, 75.7, '#ccadff', '#222', 22], ['NOR', 968.8, 789.3, 77.3, '#46296a', '#fff', 23], ['SWE', 1119, 791, 73, '#945de5', '#fff', 23]];
define('packed-bubble', `svg{display:block}text{font:12px Roboto,sans-serif;text-anchor:middle}`,
`<svg width="945" height="560" viewBox="495 390 945 560">${BUB.map(b => `<circle cx="${b[1]}" cy="${b[2]}" r="${b[3]}" fill="${b[4]}"/><text x="${b[1]}" y="${b[2] + 4}" fill="${b[5]}" textLength="${b[6]}" lengthAdjust="spacingAndGlyphs">${b[0]}</text>`).join('')}<circle cx="967" cy="674.500" r="1.200" fill="#b99be0"/></svg>`);

define('size-legend', `
:host{width:137px}.t{height:17px;display:flex;align-items:center;color:#222}.r{display:flex;justify-content:space-between;color:#777;margin-top:4px}svg{display:block;margin-top:2px}`,
`<div class="t">${lb('goal_14_score (A...', 130, 15)}</div><svg width="137" height="23" viewBox="0 0 137 23"><path fill="#e0e0e0" d="M5 10.500L125 0v22H5z"/><circle cx="5.700" cy="17.500" r="5.600" fill="#8c8c8c"/><circle cx="125.300" cy="11.500" r="11.400" fill="#8c8c8c"/></svg><div class="r">${lb('0', 6, 11)}${lb('81.38', 27, 11)}</div>`);
define('color-legend', `
:host{width:136px}.t{height:17px;display:flex;align-items:center;color:#222}.r{display:flex;justify-content:space-between;color:#777;margin-top:5px}
.bar{display:grid;grid-template-columns:20px 19px 19px 20px 19px 20px 19px;height:22px;margin-top:2px}`,
`<div class="t">${lb('goal_17_score (A...', 130, 15)}</div><div class="bar">${['#e8daff', '#c5a3ff', '#a56eff', '#874cdb', '#6929c4', '#491d8b', '#31135e'].map(c => `<i style="background:${c}"></i>`).join('')}</div><div class="r">${lb('74.48', 27, 11)}${lb('92.67', 28, 11)}</div>`);

define('viz-canvas', `
:host{width:1065px;background:#f3f3f3;padding:40px 0 0 60px}
.sheet{width:945px;height:691px;background:#fff;display:flex;flex-direction:column}
.head{display:flex;justify-content:space-between;padding:11px 22px 0 21px;height:48px;color:#2d2d2d}
.leg{display:flex;gap:30px;padding:1px 0 0 26px;height:82px}`,
`<div class="sheet"><div class="head">${lb('country_code colored by goal_17_score sized by goal_14_score', 591, 20, 'font-weight:600')}${ic('filter', 16, 17, 'margin-top:10px;color:#111')}</div>
<div class="leg"><size-legend></size-legend><color-legend></color-legend></div><packed-bubble></packed-bubble></div>`);

/* ---------- fields panel ---------- */
define('field-item', `
:host{height:50px;background:#f2f2f2;display:flex;align-items:center;padding-left:16px;margin-bottom:10px;color:#333}
ui-icon:last-child{margin-left:auto;margin-right:28px;color:#222}`,
el => `${ic('grip', 8, 14)}${lb(el.getAttribute('label'), el.getAttribute('w'), 17.5, 'margin-left:16px;color:#3c3c3c;font-weight:300')}${ic('vdotsS', 4, 16)}`);
define('drop-zone', `
:host{height:52px;display:flex;justify-content:center;align-items:center;color:#999;padding-bottom:2px}
svg{position:absolute;width:339px;height:52px;margin-top:2px}`,
`<svg><rect x=".5" y=".5" width="338" height="51" fill="none" stroke="#6b6b6b" stroke-dasharray="4 2"/></svg>${lb('Click or drag data here', 156, 15, '')}`);
define('field-slot', `
.h{height:40px;display:flex;align-items:center;color:#3c3c3c;font-weight:300}
.i{width:20px;display:flex;justify-content:center;margin-right:10px;color:#2d2d2d}
.req{margin-left:auto}
:host([req]) .h{color:#2d2d2d}`,
el => `<div class="h"><div class="i">${ic(el.getAttribute('icon'), el.getAttribute('iw') || 20, el.getAttribute('ih') || 20)}</div>${lb(el.getAttribute('label'), el.getAttribute('w'), 17.5, el.hasAttribute('req') ? 'font-weight:600' : '')}${el.hasAttribute('req') ? lb('*', 9, 20, 'color:#c21e25;font-weight:600;margin-left:1px') + `<div class="req">${lb('Required field', 94, 15)}</div>` : ''}</div><slot></slot>`);
define('fields-panel', `
:host{width:420px;background:#fff;padding:42px 20px 0 20px;color:#333}
h1{font-size:0;margin:0;height:31px;font-weight:300}
.row{display:flex;height:681px}
.col{width:339px;padding-top:20px}.col>*{margin-bottom:20px}
scroll-bar{margin-left:auto}`,
`<h1>${lb('Fields', 66, 25)}</h1><div class="row"><div class="col">
<field-slot icon="bubbles" label="Bubbles" w="66" req><field-item label="country_code" w="106"></field-item><drop-zone></drop-zone></field-slot>
<field-slot icon="size" label="Size" w="32"><field-item label="goal_14_score" w="117"></field-item></field-slot>
<field-slot icon="palette" ih="15" label="Color" w="42"><field-item label="goal_17_score" w="117"></field-item><drop-zone></drop-zone></field-slot>
<field-slot icon="repcol" ih="10" label="Repeat (column)" w="130"><drop-zone></drop-zone></field-slot>
<field-slot icon="reprow" label="Repeat (row)" w="101"><drop-zone></drop-zone></field-slot>
</div><scroll-bar dim top="0" size="467"></scroll-bar></div>`);

define('capture-widget', `
:host{position:absolute;left:1795px;top:478px;width:33px;height:163px;background:#1a1a1a;border-radius:4px;color:#fff;display:flex;flex-direction:column;align-items:center}
.r{display:flex;align-items:center;gap:3px;margin:4px 0 10px}`,
`<div class="r">${ic('swirl', 11, 12)}${ic('dots3', 10, 3)}</div>${ic('camera', 25, 18)}${ic('video', 25, 16, 'margin-top:17px')}${ic('stack', 25, 20, 'margin-top:15px')}${ic('gear', 24, 24, 'margin-top:13px')}`);

/* ---------- taskbar ---------- */
define('task-item', `
:host{display:flex;align-items:center;justify-content:center;flex:none;height:50px;width:50px;border-radius:5px;position:relative}
:host([on]){background:#2d302e;box-shadow:inset 0 0 0 1px #383b39}
::slotted(.b){position:absolute;right:4px;top:4px;width:20px;height:20px;border-radius:50%;background:#4cc2ff;color:#142530;font:15px "Open Sans",sans-serif;text-align:center;line-height:20px}
.i{position:absolute;bottom:1px;left:21px;width:8px;height:4px;border-radius:2px;background:#9a9a9a;display:none}
:host([on]) .i{left:15px;width:20px;background:#4cc2ff;display:block}:host([run]) .i{display:block}`, '<slot></slot><div class="i"></div>');
define('task-bar', `
:host{height:60px;background:linear-gradient(90deg,#1e2420 0,#1d241c 50%,#20211f 75%,#202020);border-top:1px solid #3d443e;display:flex;align-items:center;position:relative;font-family:"Open Sans",sans-serif;color:#fff}
.w{width:31px;height:34px;margin-left:25px;position:relative;margin-top:-8px}
.wb{position:absolute;left:13px;top:-1px;width:20px;height:20px;border-radius:50%;background:#c42b1c;text-align:center;font-size:13px;line-height:19px;font-weight:600}
.wt{margin-left:8px;width:483px;display:flex;flex-direction:column;align-items:flex-start;gap:1px;margin-top:-1px}
.pill{width:273px;height:38px;border-radius:19px;background:#f3f3f3;margin:0 6px 0 17.500px;display:flex;align-items:center;color:#222}
.pre{position:absolute;left:18px;top:31px;width:23px;height:10px;border-radius:2px;background:#ffc40c;color:#222;font-size:8.500px;line-height:10px;text-align:center;font-weight:800;letter-spacing:.4px}
.r{width:30px;height:30px;border-radius:50%;background:#75a8db;font:22px/30px "Liberation Serif",serif;text-align:center}
.tray{margin-left:auto;display:flex;align-items:center}
.c{display:flex;flex-direction:column;align-items:center;gap:1px}`,
`<div class="w">${ic('weather', 31, 33)}<div class="wb">1</div></div><div class="wt">${lb('16°C', 30, 14.5)}${lb('Partly cloudy', 86, 14.5, 'color:#c0c4c1')}</div>
${ic('windows', 29, 29, 'margin-left:10px')}
<div class="pill">${ic('search', 19, 19, 'margin-left:14px')}${lb('Search', 51, 17, 'margin-left:12px;color:#5b5b5b')}${ic('mat', 30, 20, 'margin-left:auto')}${ic('salad', 26, 24, 'margin:0 7px 0 2px')}</div>
<task-item>${ic('copilot', 29, 27)}<div class="pre">PRE</div></task-item><task-item style="margin-left:5px">${ic('taskview', 30, 28)}</task-item>
<task-item style="margin-left:5px">${ic('teams', 29, 29)}<div class="b">1</div></task-item>
<task-item style="margin-left:5px"><div class="r">R</div></task-item><task-item style="margin-left:6px">${ic('python', 29, 29)}</task-item><task-item style="margin-left:4px">${ic('paint', 29, 29)}</task-item><task-item style="margin-left:4px">${ic('edge', 30, 30)}</task-item><task-item run style="margin-left:5px">${ic('folder', 30, 26)}</task-item><task-item on style="margin-left:5px">${ic('chrome', 30, 30)}<div class="b">${ic('avatar', 20)}</div></task-item>
<div class="tray">${ic('trayUp', 14, 8)}${ic('cloud', 20, 14, 'margin-left:23px')}<div class="c" style="margin-left:24px">${lb('ENG', 28, 14.5)}${lb('IN', 14, 14.5)}</div>${ic('wifi', 20, 16, 'margin-left:23px')}${ic('sound', 20, 16, 'margin-left:10px')}${ic('battery', 20, 16, 'margin-left:10px')}<div class="c" style="margin-left:20px;align-items:flex-end">${lb('20:33', 36, 14.5)}${lb('06-01-2024', 78, 14.5)}</div>${ic('bellFill', 16, 19, 'margin:0 27px 0 11px;color:#92e3fb')}</div>`);

define('analytics-desktop', `
:host{width:1920px;height:1080px;position:relative;display:flex;flex-direction:column}
.body{height:800px;display:flex}
.gut{width:10px;background:#e9e9e9;display:flex;align-items:center;justify-content:center;gap:2px;padding-top:2px}
.gut i{width:1.500px;height:20px;background:#333}
.right{width:1485px;display:flex;flex-direction:column}
.work{display:flex;height:791px}
.strip{height:9px;background:#e9e9e9;display:flex;flex-direction:column;align-items:center;justify-content:center;gap:1px}
.strip i{width:18px;height:1px;background:#333}.strip i+i{height:2px;background:#756d78}`,
`<browser-tabs></browser-tabs><browser-toolbar></browser-toolbar><product-header></product-header><tool-bar></tool-bar>
<div class="body"><side-rail></side-rail><cards-panel></cards-panel><div class="gut"><i></i><i></i></div>
<div class="right"><div class="work"><viz-canvas></viz-canvas><fields-panel></fields-panel></div><div class="strip"><i></i><i></i></div></div></div>
<task-bar></task-bar><capture-widget></capture-widget>`);

define('ui-icon', ':host{display:inline-block;flex:none;position:relative}svg{display:block;width:100%;height:100%;overflow:visible;fill:currentColor}',
  el => `<svg viewBox="${ICONS[el.getAttribute('name')][0]}" preserveAspectRatio="none">${ICONS[el.getAttribute('name')][1]}</svg>`,
  el => { el.style.width = el.getAttribute('w') + 'px'; el.style.height = el.getAttribute('h') + 'px'; });

/* Single-line label whose tracking is adjusted to fill the width given by "w". */
define('ui-label', ':host{display:inline-block;flex:none;white-space:pre;line-height:1.300}', '<slot></slot>', el => {
  const w = +el.getAttribute('w'), n = el.textContent.length;
  el.style.letterSpacing = ((w - el.getBoundingClientRect().width) / n).toFixed(3) + 'px';
  el.style.width = w + 'px';
});
</script>
</body>
</html>
